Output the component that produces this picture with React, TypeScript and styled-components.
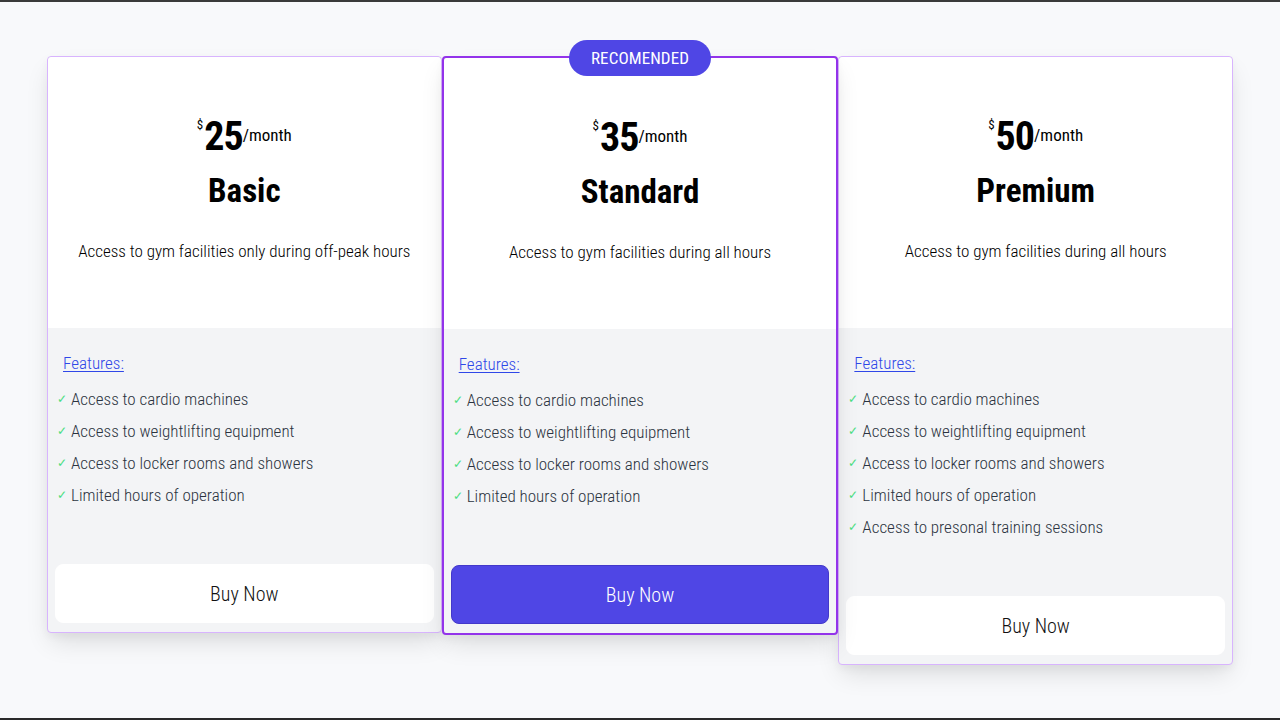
import React from "react";
import styled, { createGlobalStyle } from "styled-components";

const GlobalStyle = createGlobalStyle`
  * { box-sizing: border-box; }
  html, body { margin: 0; padding: 0; }
  body {
    background: #f8f9fb;
    font-family: "Roboto Condensed", "Open Sans", sans-serif;
    font-weight: 300;
    color: #111;
  }
`;

const Page = styled.main`
  height: 720px;
  border-top: 2px solid #3a3a3a;
  border-bottom: 2px solid #2a2a2a;
  padding-top: 54px;
  display: flex;
  justify-content: center;
  align-items: flex-start;
`;

const Plans = styled.div`
  width: 1186px;
  display: flex;
  align-items: flex-start;
`;

const Card = styled.section<{ $featured?: boolean }>`
  position: relative;
  flex: 1 1 0;
  min-width: 0;
  border: ${(p) => (p.$featured ? "2px solid #9333ea" : "1px solid #d8b4fe")};
  border-radius: 4px;
  background: #f3f4f6;
  box-shadow: 0 12px 24px -4px rgba(0, 0, 0, 0.12), 0 4px 8px rgba(0, 0, 0, 0.04);
  z-index: ${(p) => (p.$featured ? 2 : 1)};
  display: flex;
  flex-direction: column;
`;

const Badge = styled.div`
  position: absolute;
  top: -18px;
  left: 50%;
  transform: translateX(-50%);
  width: 142px;
  height: 36px;
  border-radius: 18px;
  background: #4f46e5;
  color: #fff;
  font-size: 17px;
  font-weight: 400;
  display: flex;
  align-items: center;
  justify-content: center;
  letter-spacing: 0.1px;
`;

const Header = styled.div`
  height: 271px;
  background: #fff;
  border-radius: 4px 4px 0 0;
  display: flex;
  flex-direction: column;
  align-items: center;
  padding-top: 60px;
`;

const Price = styled.div`
  display: flex;
  align-items: flex-start;
  line-height: 1;
  color: #000;
`;

const Currency = styled.span`
  font-size: 13px;
  font-weight: 400;
  margin-top: 1px;
  margin-right: 1px;
`;

const Amount = styled.span`
  font-size: 40px;
  font-weight: 700;
  letter-spacing: -1px;
`;

const Period = styled.span`
  font-size: 17px;
  font-weight: 400;
  margin-top: 10px;
`;

const Title = styled.h2`
  margin: 14px 0 0;
  font-size: 33px;
  font-weight: 700;
  line-height: 40px;
  color: #000;
`;

const Description = styled.p`
  margin: 28px 0 0;
  font-size: 17px;
  line-height: 24px;
  color: #000;
  text-align: center;
`;

const Body = styled.div`
  display: flex;
  flex-direction: column;
  padding: 23px 7px 9px 7px;
`;

const FeaturesLabel = styled.a`
  align-self: flex-start;
  margin-left: 8px;
  font-size: 17px;
  line-height: 24px;
  color: #2f47e8;
  text-decoration: underline;
  text-underline-offset: 2px;
  cursor: pointer;
`;

const List = styled.ul`
  list-style: none;
  margin: 12px 0 0;
  padding: 0 0 0 2px;
  display: flex;
  flex-direction: column;
  gap: 8px;
`;

const Item = styled.li`
  display: flex;
  align-items: center;
  gap: 4px;
  font-size: 17px;
  line-height: 24px;
  color: #2b3340;
`;

const Check = styled.span`
  color: #4ade80;
  font-size: 12px;
  width: 10px;
  font-family: "DejaVu Sans", sans-serif;
`;

const BuyButton = styled.button<{ $primary?: boolean }>`
  margin-top: 57px;
  height: 59px;
  width: 100%;
  border-radius: 8px;
  border: 1px solid ${(p) => (p.$primary ? "#4338ca" : "#fff")};
  background: ${(p) => (p.$primary ? "#4f46e5" : "#fff")};
  color: ${(p) => (p.$primary ? "#fff" : "#111")};
  font-family: inherit;
  font-weight: 300;
  font-size: 20px;
  cursor: pointer;
`;

type Plan = {
  price: number;
  name: string;
  description: string;
  features: string[];
  featured?: boolean;
};

const base = [
  "Access to cardio machines",
  "Access to weightlifting equipment",
  "Access to locker rooms and showers",
  "Limited hours of operation",
];

const plans: Plan[] = [
  {
    price: 25,
    name: "Basic",
    description: "Access to gym facilities only during off-peak hours",
    features: base,
  },
  {
    price: 35,
    name: "Standard",
    description: "Access to gym facilities during all hours",
    features: base,
    featured: true,
  },
  {
    price: 50,
    name: "Premium",
    description: "Access to gym facilities during all hours",
    features: [...base, "Access to presonal training sessions"],
  },
];

export default function App() {
  return (
    <>
      <GlobalStyle />
      <Page>
        <Plans>
          {plans.map((p) => (
            <Card key={p.name} $featured={p.featured}>
              {p.featured && <Badge>RECOMENDED</Badge>}
              <Header>
                <Price>
                  <Currency>$</Currency>
                  <Amount>{p.price}</Amount>
                  <Period>/month</Period>
                </Price>
                <Title>{p.name}</Title>
                <Description>{p.description}</Description>
              </Header>
              <Body>
                <FeaturesLabel>Features:</FeaturesLabel>
                <List>
                  {p.features.map((f) => (
                    <Item key={f}>
                      <Check>✓</Check>
                      {f}
                    </Item>
                  ))}
                </List>
                <BuyButton $primary={p.featured}>Buy Now</BuyButton>
              </Body>
            </Card>
          ))}
        </Plans>
      </Page>
    </>
  );
}
